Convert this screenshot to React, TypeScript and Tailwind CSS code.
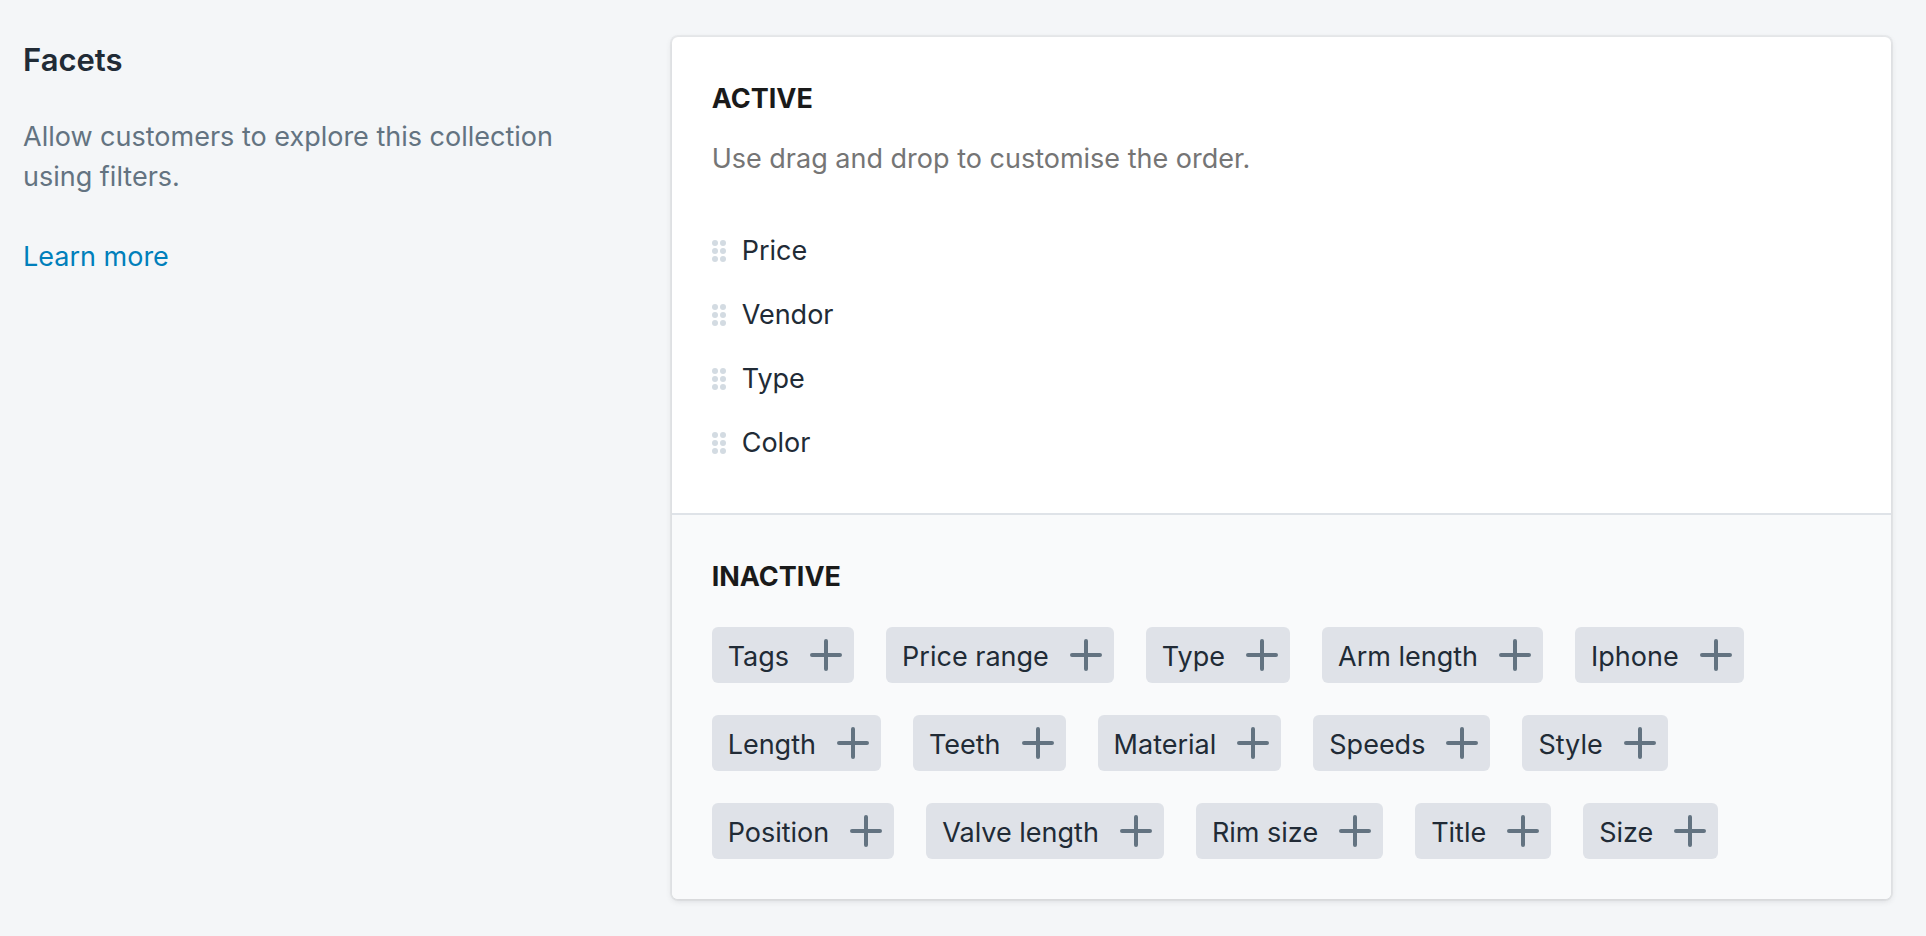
import { useState } from 'react'

const initialActive = ['Price', 'Vendor', 'Type', 'Color']

const inactiveFacets = [
  { id: 'tags', label: 'Tags' },
  { id: 'price-range', label: 'Price range' },
  { id: 'type', label: 'Type' },
  { id: 'arm-length', label: 'Arm length' },
  { id: 'iphone', label: 'Iphone' },
  { id: 'length', label: 'Length' },
  { id: 'teeth', label: 'Teeth' },
  { id: 'material', label: 'Material' },
  { id: 'speeds', label: 'Speeds' },
  { id: 'style', label: 'Style' },
  { id: 'position', label: 'Position' },
  { id: 'valve-length', label: 'Valve length' },
  { id: 'rim-size', label: 'Rim size' },
  { id: 'title', label: 'Title' },
  { id: 'size', label: 'Size' },
]

// ── Icons ──────────────────────────────────────────────────────────────────
function DragHandle() {
  return (
    <svg width="14" height="24" viewBox="0 0 14 24" fill="#d3dbe2" aria-hidden="true">
      {[4, 12, 20].map((cy) => (
        <g key={cy}>
          <circle cx="3" cy={cy} r="3" />
          <circle cx="11" cy={cy} r="3" />
        </g>
      ))}
    </svg>
  )
}

function PlusIcon() {
  return (
    <svg width="32" height="32" viewBox="0 0 32 32" fill="none"
      stroke="#637381" strokeWidth="4" strokeLinecap="round" aria-hidden="true">
      <path d="M16 2v28M2 16h28" />
    </svg>
  )
}

// ── Main ───────────────────────────────────────────────────────────────────
export default function App() {
  const [active, setActive] = useState(initialActive)
  const [inactive, setInactive] = useState(inactiveFacets)
  const [dragged, setDragged] = useState<number | null>(null)

  const handleAdd = (id: string, label: string) => {
    setActive([...active, label])
    setInactive(inactive.filter((f) => f.id !== id))
  }

  const handleDrop = (target: number) => {
    if (dragged === null) return
    const next = [...active]
    const [moved] = next.splice(dragged, 1)
    next.splice(target, 0, moved)
    setActive(next)
    setDragged(null)
  }

  return (
    <main className="min-h-screen bg-[#f4f6f8] pt-9 pr-[35px] pb-9 pl-[23px]
      font-['Inter','Liberation_Sans',sans-serif] text-[27px] leading-10 text-[#212b36]">
      <div className="grid grid-cols-[1fr_2fr] items-start gap-[39px]">

        {/* Annotation */}
        <div className="pr-10">
          <h2 className="text-[31px] leading-[48px] font-semibold">Facets</h2>
          <p className="mt-[33px] text-[#637381]">
            Allow customers to explore this collection using filters.
          </p>
          <a href="#" className="mt-10 inline-block text-[#007fbb]">Learn more</a>
        </div>

        {/* Card */}
        <div className="mt-px overflow-hidden rounded-md bg-white
          shadow-[0_0_0_2px_rgba(63,63,68,0.05),0_2px_6px_rgba(63,63,68,0.15)]">
          <section className="px-10 pt-[42px] pb-[38px]">
            <h3 className="font-bold text-[#1a1a1a]">ACTIVE</h3>
            <p className="mt-5 text-[#757575]">Use drag and drop to customise the order.</p>
            <ul className="mt-10">
              {active.map((label, i) => (
                <li
                  key={`${label}-${i}`}
                  draggable
                  onDragStart={() => setDragged(i)}
                  onDragOver={(e) => e.preventDefault()}
                  onDrop={() => handleDrop(i)}
                  className="flex cursor-grab items-center gap-4 py-3"
                >
                  <DragHandle />
                  {label}
                </li>
              ))}
            </ul>
          </section>

          <section className="border-t-2 border-[#dfe3e8] bg-[#f9fafb] px-10 pt-[42px] pb-10">
            <h3 className="font-bold text-[#1a1a1a]">INACTIVE</h3>
            <div className="mt-[30px] flex flex-wrap gap-8">
              {inactive.map((facet) => (
                <button
                  key={facet.id}
                  type="button"
                  onClick={() => handleAdd(facet.id, facet.label)}
                  className="flex h-14 cursor-pointer items-center gap-[21px] rounded-md
                    bg-[#dfe2e8] pr-3 pl-4"
                >
                  <span className="pt-1">{facet.label}</span>
                  <PlusIcon />
                </button>
              ))}
            </div>
          </section>
        </div>

      </div>
    </main>
  )
}
